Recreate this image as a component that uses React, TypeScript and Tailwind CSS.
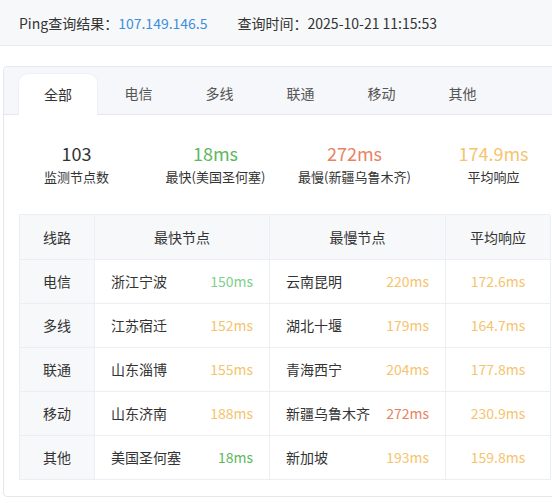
import React from 'react'

const font = { fontFamily: '"Noto Sans CJK SC", "Noto Sans", sans-serif' }

const tabs = ['全部', '电信', '多线', '联通', '移动', '其他']

const stats = [
  { value: '103', label: '监测节点数', color: 'text-[#333]' },
  { value: '18ms', label: '最快(美国圣何塞)', color: 'text-[#5cb85c]' },
  { value: '272ms', label: '最慢(新疆乌鲁木齐)', color: 'text-[#e9825f]' },
  { value: '174.9ms', label: '平均响应', color: 'text-[#f5c46e]' },
]

const GREEN_LIGHT = 'text-[#7fcf8d]'
const GREEN = 'text-[#5cb85c]'
const ORANGE = 'text-[#f5c46e]'
const RED = 'text-[#e9825f]'

const rows = [
  { line: '电信', fast: '浙江宁波', fastMs: '150ms', fastColor: GREEN_LIGHT, slow: '云南昆明', slowMs: '220ms', slowColor: ORANGE, avg: '172.6ms' },
  { line: '多线', fast: '江苏宿迁', fastMs: '152ms', fastColor: ORANGE, slow: '湖北十堰', slowMs: '179ms', slowColor: ORANGE, avg: '164.7ms' },
  { line: '联通', fast: '山东淄博', fastMs: '155ms', fastColor: ORANGE, slow: '青海西宁', slowMs: '204ms', slowColor: ORANGE, avg: '177.8ms' },
  { line: '移动', fast: '山东济南', fastMs: '188ms', fastColor: ORANGE, slow: '新疆乌鲁木齐', slowMs: '272ms', slowColor: RED, avg: '230.9ms' },
  { line: '其他', fast: '美国圣何塞', fastMs: '18ms', fastColor: GREEN, slow: '新加坡', slowMs: '193ms', slowColor: ORANGE, avg: '159.8ms' },
]

export default function App() {
  return (
    <div className="w-[552px] h-[503px] overflow-hidden bg-white text-[#333]" style={font}>
      {/* query info */}
      <div className="h-[46px] bg-[#f7f8fa] border-b border-[#e9ecef] pl-[19px] pt-px flex items-center text-[14px]">
        <span>Ping查询结果：</span>
        <span className="text-[#3d8fdf]">107.149.146.5</span>
        <span className="ml-[30px]">查询时间：2025-10-21 11:15:53</span>
      </div>

      <div className="mt-[20px] ml-[3px] w-[580px] border border-[#e4e7ed] rounded-[4px] pb-[16px]">
        {/* tabs */}
        <div className="h-[48px] bg-[#f5f7fa] border-b border-[#e4e7ed] rounded-t-[4px] pl-[14px] flex items-end">
          {tabs.map((t, i) =>
            i === 0 ? (
              <div
                key={t}
                className="w-[80px] h-[42px] -mb-px bg-white rounded-t-[10px] flex items-center justify-center text-[14px] text-[#333] border-x border-t border-[#eef0f3]"
              >
                {t}
              </div>
            ) : (
              <div key={t} className="w-[81px] h-[42px] flex items-center justify-center text-[14px] text-[#555]">
                {t}
              </div>
            )
          )}
        </div>

        {/* summary */}
        <div className="pl-[3px] pt-[26px] grid grid-cols-4 w-[559px]">
          {stats.map((s) => (
            <div key={s.label} className="flex flex-col items-center">
              <div className={`text-[18px] leading-[24px] ${s.color}`}>{s.value}</div>
              <div className="mt-[2px] text-[13px] leading-[20px] text-[#333]">{s.label}</div>
            </div>
          ))}
        </div>

        {/* table */}
        <div className="ml-[15px] mt-[27px] w-[531px] grid grid-cols-[75px_175px_176px_105px] border-l border-t border-[#ebeef2] text-[14px]">
          <div className="h-[45px] bg-[#f7f8fa] border-r border-b border-[#ebeef2] flex items-center justify-center">线路</div>
          <div className="h-[45px] bg-[#f7f8fa] border-r border-b border-[#ebeef2] flex items-center justify-center">最快节点</div>
          <div className="h-[45px] bg-[#f7f8fa] border-r border-b border-[#ebeef2] flex items-center justify-center">最慢节点</div>
          <div className="h-[45px] bg-[#f7f8fa] border-r border-b border-[#ebeef2] flex items-center justify-center">平均响应</div>
          {rows.map((r) => (
            <React.Fragment key={r.line}>
              <div className="h-[44px] bg-[#f7f8fa] border-r border-b border-[#ebeef2] flex items-center justify-center">{r.line}</div>
              <div className="h-[44px] border-r border-b border-[#ebeef2] px-[16px] flex items-center justify-between">
                <span>{r.fast}</span>
                <span className={r.fastColor}>{r.fastMs}</span>
              </div>
              <div className="h-[44px] border-r border-b border-[#ebeef2] px-[16px] flex items-center justify-between">
                <span>{r.slow}</span>
                <span className={r.slowColor}>{r.slowMs}</span>
              </div>
              <div className={`h-[44px] border-r border-b border-[#ebeef2] flex items-center justify-center ${ORANGE}`}>{r.avg}</div>
            </React.Fragment>
          ))}
        </div>
      </div>
    </div>
  )
}
